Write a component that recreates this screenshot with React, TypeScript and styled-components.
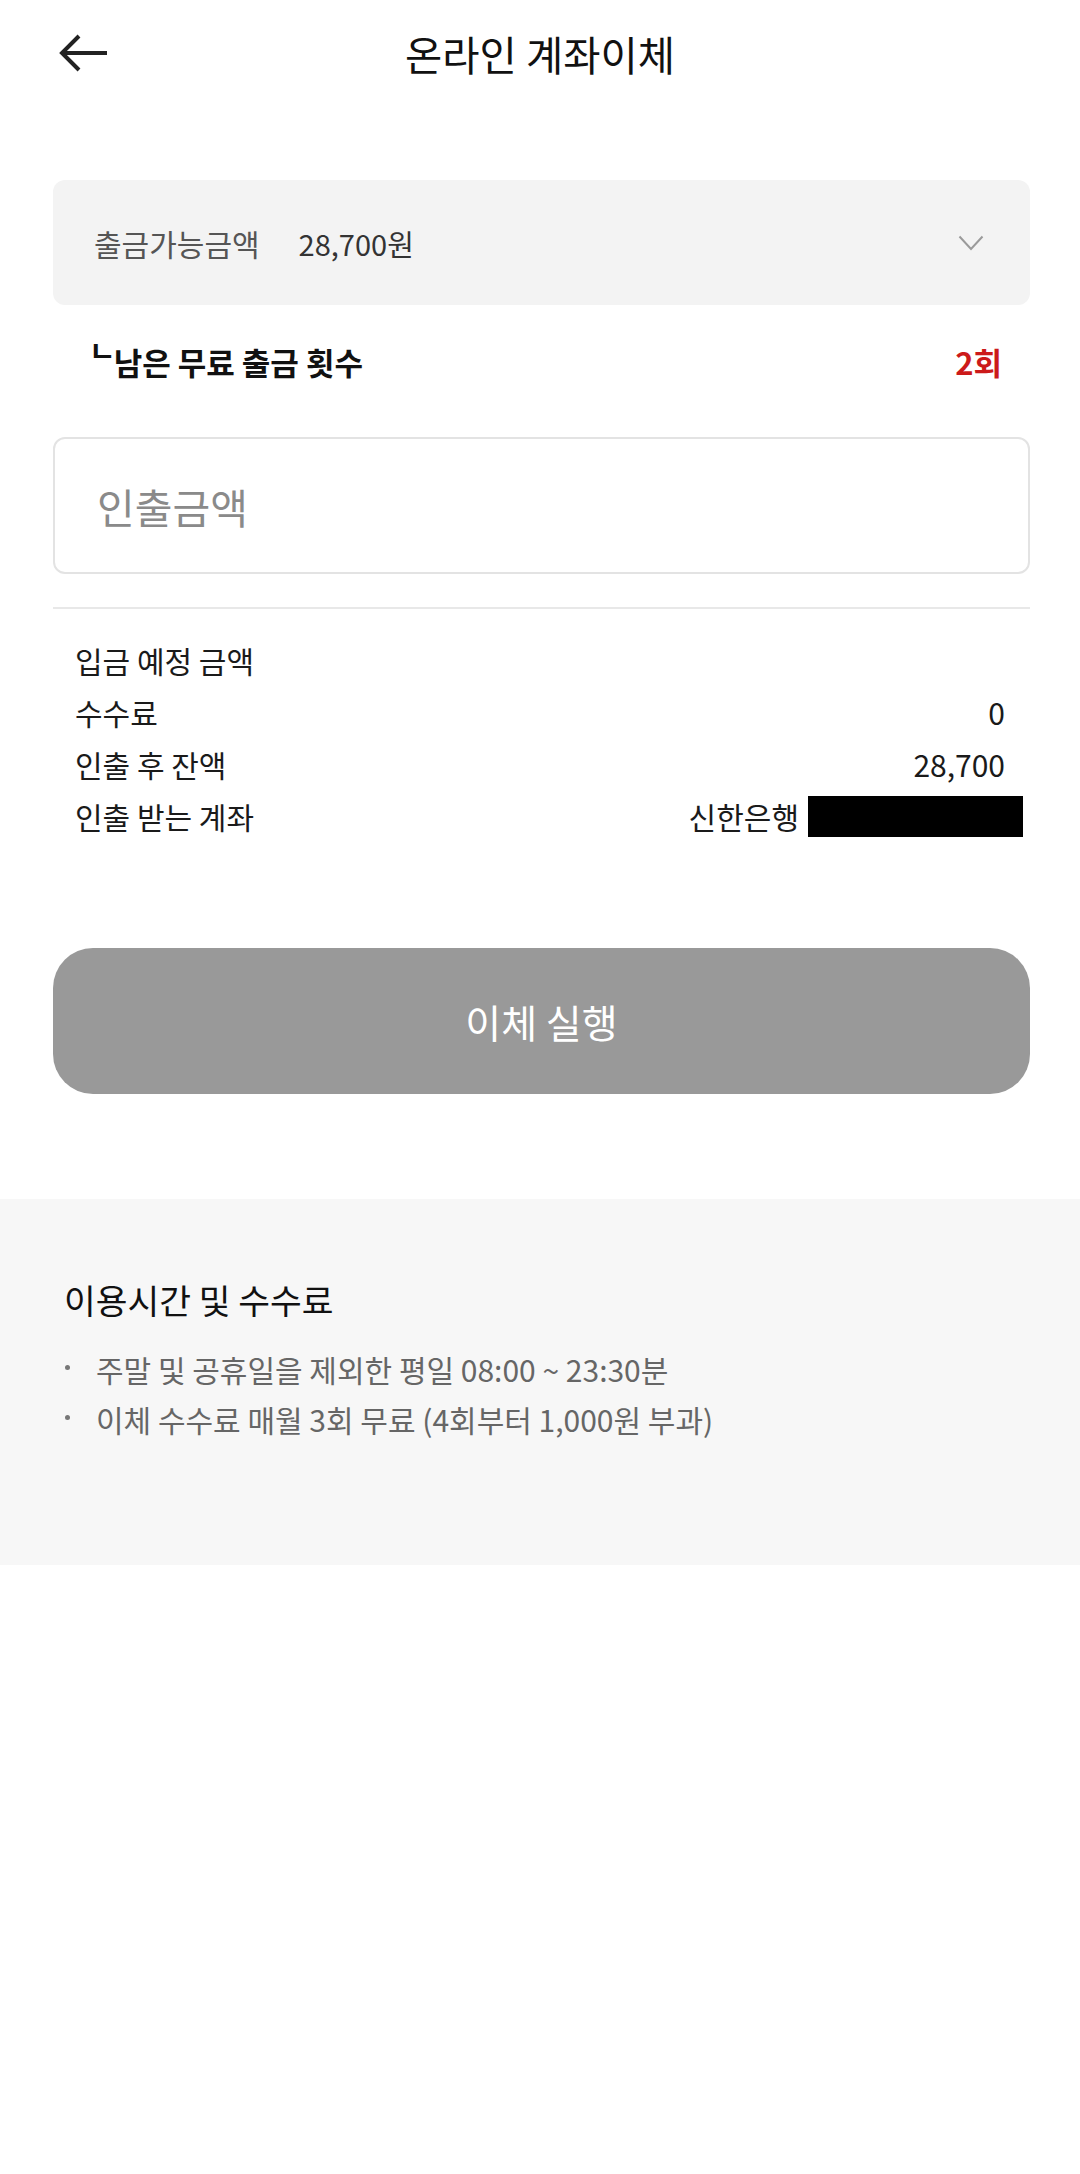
import React from 'react'
import styled, { createGlobalStyle } from 'styled-components'

const GlobalStyle = createGlobalStyle`
  * {
    box-sizing: border-box;
  }
  body {
    margin: 0;
    background: #fff;
    color: #111;
    font-family: 'Noto Sans CJK KR', 'Noto Sans', sans-serif;
  }
`

type Detail = {
  label: string
  value: string
}

const details: Detail[] = [
  { label: '입금 예정 금액', value: '' },
  { label: '수수료', value: '0' },
  { label: '인출 후 잔액', value: '28,700' },
]

const notices = [
  '주말 및 공휴일을 제외한 평일 08:00 ~ 23:30분',
  '이체 수수료 매월 3회 무료 (4회부터 1,000원 부과)',
]

const BackIcon = () => (
  <svg width="52" height="42" viewBox="0 0 52 42" fill="none">
    <path d="M50 21H5" stroke="#222" strokeWidth="4" />
    <path d="M22 4L5 21L22 38" stroke="#222" strokeWidth="4" />
  </svg>
)

const ChevronIcon = () => (
  <svg width="26" height="16" viewBox="0 0 26 16" fill="none">
    <path d="M1.5 1.5L13 14L24.5 1.5" stroke="#9a9a9a" strokeWidth="2" />
  </svg>
)

export default function App() {
  return (
    <>
      <GlobalStyle />
      <Header>
        <BackButton aria-label="back">
          <BackIcon />
        </BackButton>
        <Title>온라인 계좌이체</Title>
      </Header>
      <Content>
        <AvailableBox>
          <AvailableLabel>출금가능금액</AvailableLabel>
          <AvailableAmount>28,700원</AvailableAmount>
          <ChevronIcon />
        </AvailableBox>
        <FreeRow>
          <span>
            <Corner>ㄴ</Corner>남은 무료 출금 횟수
          </span>
          <FreeCount>2회</FreeCount>
        </FreeRow>
        <AmountInput placeholder="인출금액" inputMode="numeric" />
        <Divider />
        <DetailList>
          {details.map((d) => (
            <DetailRow key={d.label}>
              <span>{d.label}</span>
              <span>{d.value}</span>
            </DetailRow>
          ))}
          <DetailRow>
            <span>인출 받는 계좌</span>
            <Account>
              신한은행
              <Redacted />
            </Account>
          </DetailRow>
        </DetailList>
        <SubmitButton>이체 실행</SubmitButton>
      </Content>
      <InfoSection>
        <InfoTitle>이용시간 및 수수료</InfoTitle>
        <InfoList>
          {notices.map((n) => (
            <InfoItem key={n}>
              <Dot />
              {n}
            </InfoItem>
          ))}
        </InfoList>
      </InfoSection>
    </>
  )
}

const Header = styled.header`
  display: grid;
  grid-template-columns: 1fr auto 1fr;
  align-items: center;
  height: 106px;
`

const BackButton = styled.button`
  all: unset;
  justify-self: start;
  display: flex;
  margin-left: 57px;
  cursor: pointer;
`

const Title = styled.h1`
  margin: 0;
  font-size: 40.5px;
  font-weight: 400;
  color: #111;
`

const Content = styled.main`
  padding: 0 50px 0 53px;
`

const AvailableBox = styled.div`
  display: flex;
  align-items: center;
  height: 125px;
  margin-top: 74px;
  padding: 0 46px 0 41px;
  background: #f3f3f3;
  border-radius: 12px;
`

const AvailableLabel = styled.span`
  font-size: 30px;
  color: #555;
`

const AvailableAmount = styled.span`
  flex: 1;
  margin-left: 39px;
  font-size: 29px;
  color: #333;
`

const FreeRow = styled.div`
  display: flex;
  align-items: center;
  justify-content: space-between;
  height: 36px;
  margin: 38px 0 58px;
  padding: 0 28px 0 36px;
  font-size: 31px;
  font-weight: 700;
  color: #111;
`

const Corner = styled.span`
  margin-right: -2px;
  font-size: 29px;
  line-height: 0;
  vertical-align: 12px;
`

const FreeCount = styled.span`
  color: #cc1a1a;
`

const AmountInput = styled.input`
  display: block;
  width: 100%;
  height: 137px;
  padding: 0 0 0 42px;
  border: 2px solid #e3e3e3;
  border-radius: 12px;
  background: #fff;
  font-family: inherit;
  font-size: 41px;
  color: #111;
  outline: none;
  &::placeholder {
    color: #8a8a8a;
  }
`

const Divider = styled.hr`
  height: 2px;
  margin: 33px 0 0;
  border: 0;
  background: #e8e8e8;
`

const DetailList = styled.div`
  margin-top: 25px;
  padding: 0 25px 0 22px;
`

const DetailRow = styled.div`
  display: flex;
  align-items: center;
  justify-content: space-between;
  height: 52px;
  font-size: 30px;
  color: #1a1a1a;
`

const Account = styled.span`
  display: flex;
  align-items: center;
`

const Redacted = styled.span`
  width: 215px;
  height: 41px;
  margin: 0 -18px 0 9px;
  background: #000;
`

const SubmitButton = styled.button`
  display: block;
  width: 100%;
  height: 146px;
  margin-top: 106px;
  border: 0;
  border-radius: 40px;
  background: #999;
  font-family: inherit;
  font-size: 39px;
  color: #fff;
  cursor: pointer;
`

const InfoSection = styled.section`
  height: 366px;
  margin-top: 105px;
  padding: 78px 0 0 56px;
  background: #f7f7f7;
`

const InfoTitle = styled.h2`
  margin: 0 0 0 8px;
  font-size: 34.5px;
  font-weight: 400;
  line-height: 44px;
  color: #111;
`

const InfoList = styled.ul`
  margin: 23px 0 0;
  padding: 0;
  list-style: none;
`

const InfoItem = styled.li`
  display: flex;
  align-items: center;
  font-size: 30px;
  line-height: 50px;
  color: #666;
`

const Dot = styled.span`
  flex-shrink: 0;
  width: 5px;
  height: 5px;
  margin: 0 26px 4px 9px;
  border-radius: 50%;
  background: #777;
`
